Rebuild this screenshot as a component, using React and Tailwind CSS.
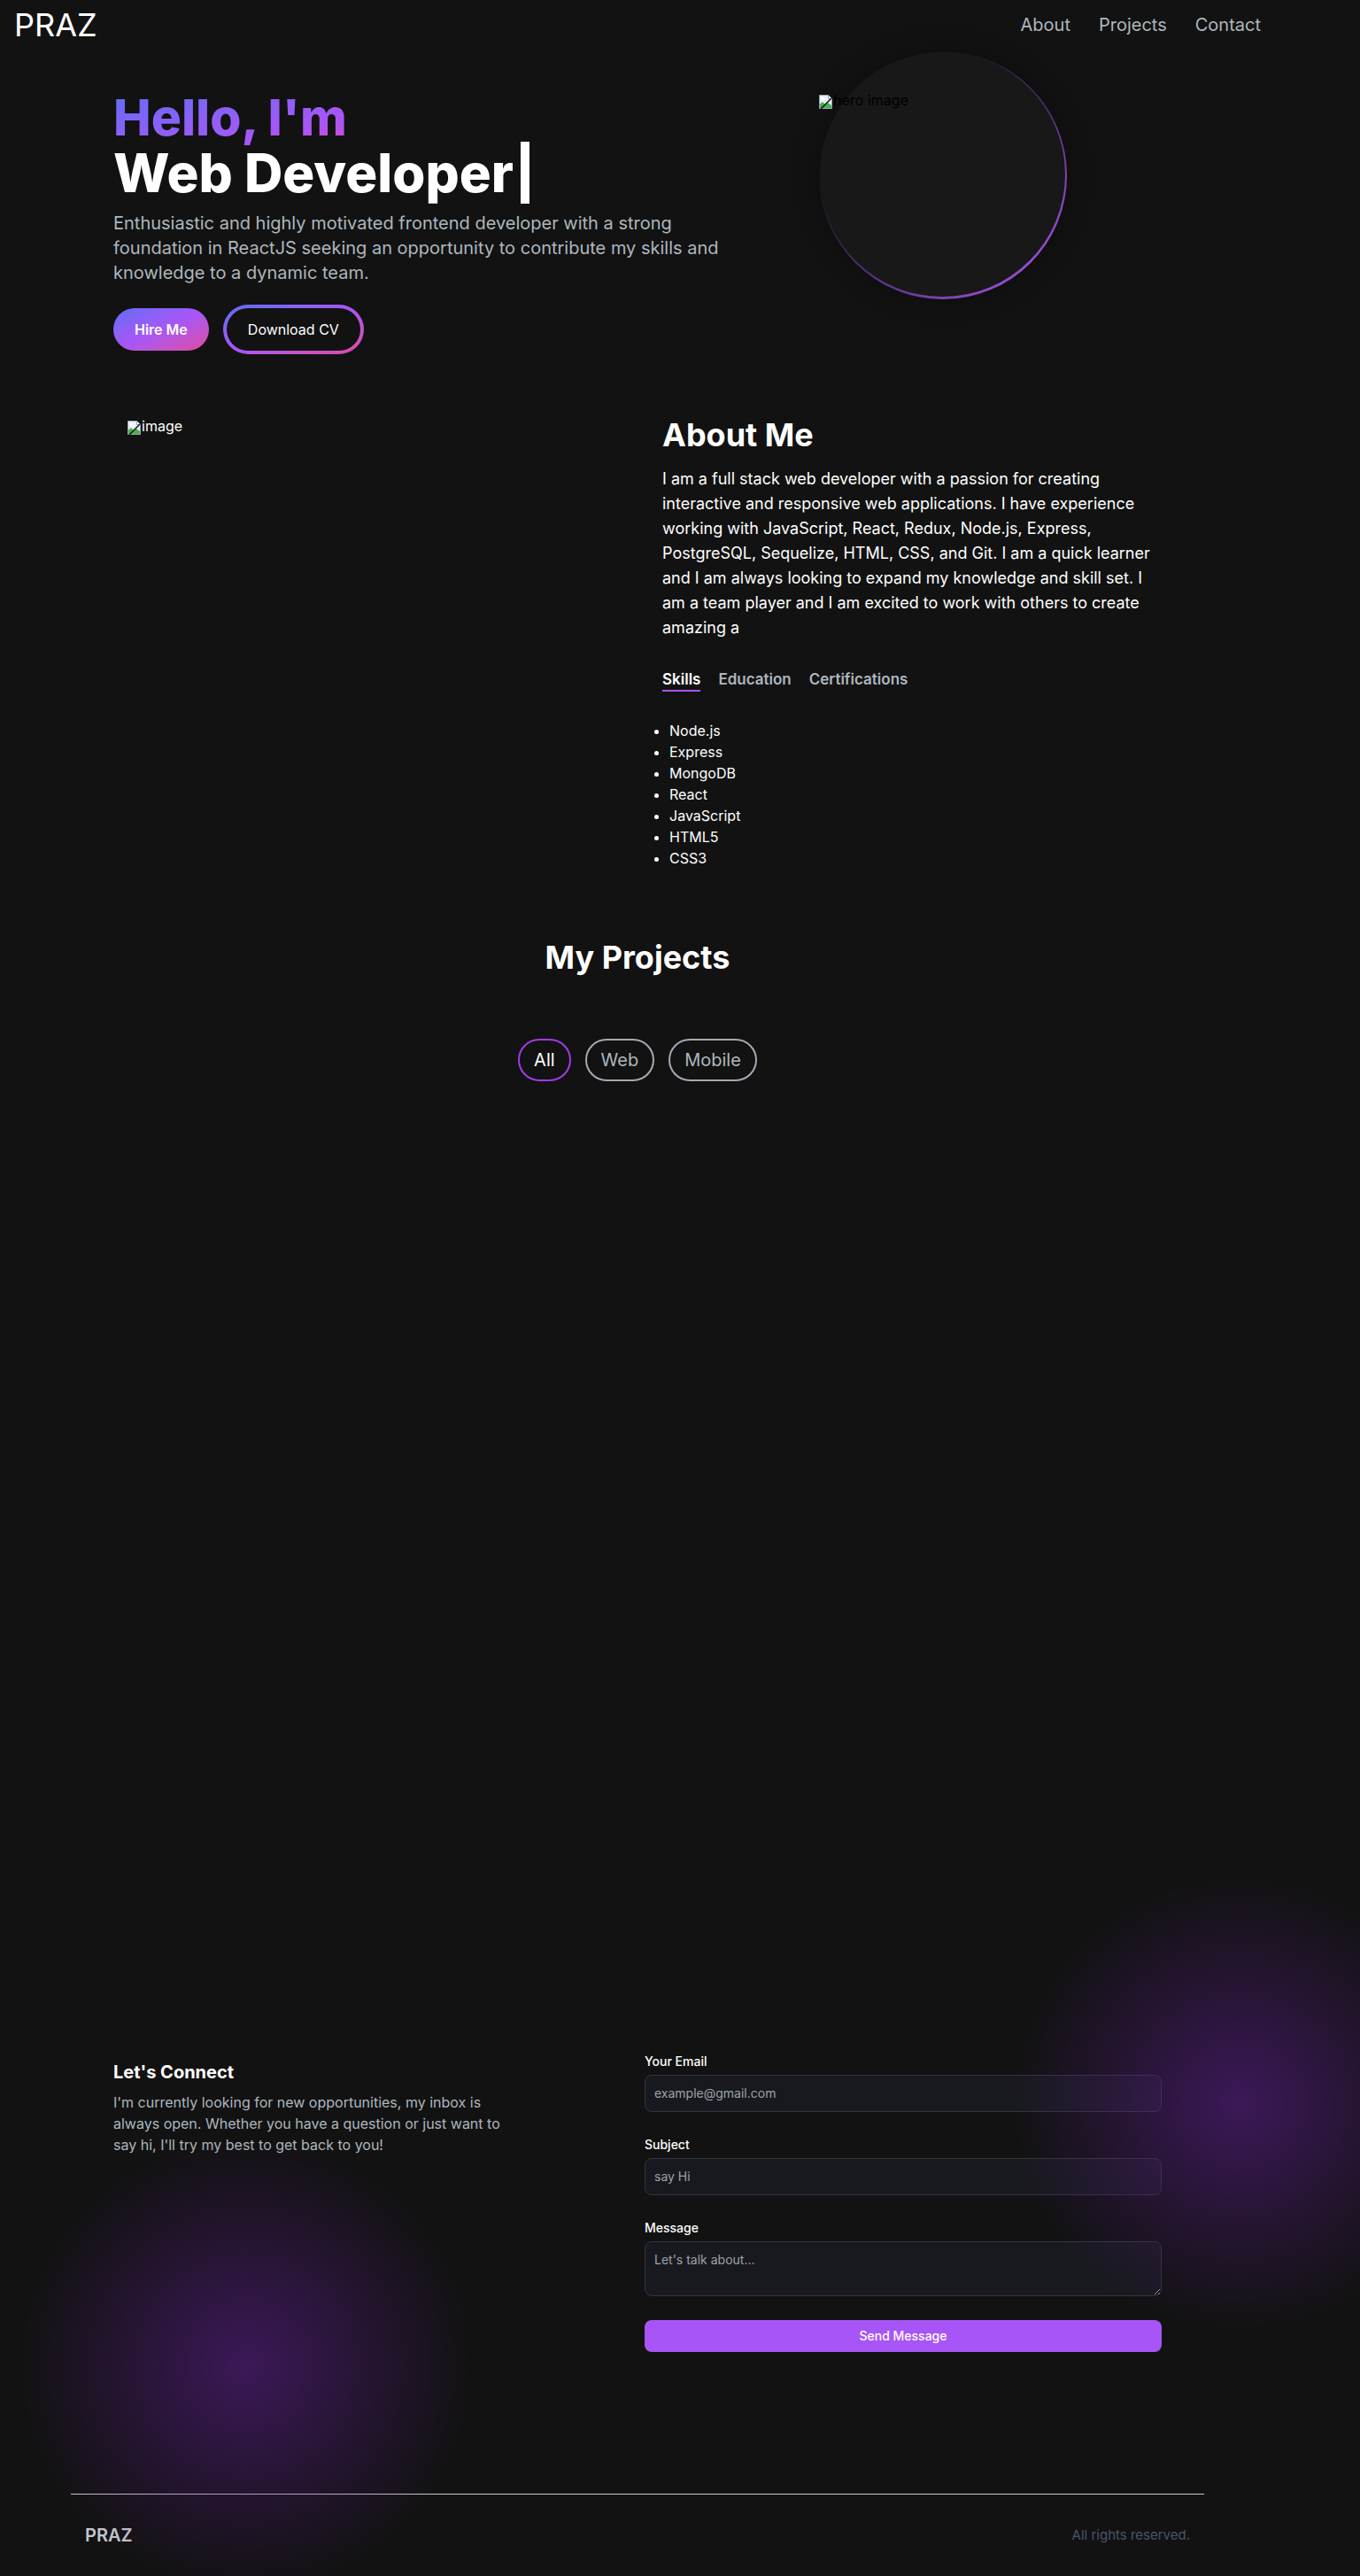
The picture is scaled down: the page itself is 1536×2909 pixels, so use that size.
import React from 'react';

const BrokenImage = () => (
    <svg width="16" height="16" viewBox="0 0 16 16" className="shrink-0">
        <path d="M0.5 0.5h10l4 4v11h-14z" fill="#e9f0fa" stroke="#9aa4b1" />
        <path d="M10.5 0.5v4h4" fill="#ffffff" stroke="#9aa4b1" />
        <path d="M1 15V10.5l3-2.5 3 3 3-2 4 3V15z" fill="#4caf50" />
        <ellipse cx="5" cy="4.5" rx="2.2" ry="1.2" fill="#ffffff" />
        <path d="M2 16L14 4" stroke="#121212" strokeWidth="1.5" />
    </svg>
);

const Navbar = () => {
    return (
        <nav className="flex items-center justify-between px-4 py-2">
            {/* Logo */}
            <span className="text-4xl text-white">PRAZ</span>

            {/* Links */}
            <ul className="flex gap-8">
                <li className="text-xl text-[#ADB7BE]">About</li>
                <li className="text-xl text-[#ADB7BE]">Projects</li>
                <li className="text-xl text-[#ADB7BE]">Contact</li>
            </ul>
        </nav>
    );
};

const Hero = () => {
    return (
        <section className="grid grid-cols-12">
            <div className="col-span-7 pt-[44px]">
                <h1 className="mb-[12px] text-6xl font-extrabold leading-[62px] text-white">
                    <span className="bg-linear-to-br from-[#5a6cf6] via-[#a855f7] via-75% to-[#d946c8] bg-clip-text text-[57px] text-transparent">
                        Hello, I'm
                    </span>
                    <span className="flex items-center">
                        <span>Web Developer</span>
                        <span className="-my-1 ml-2 h-[70px] w-[10px] bg-white"></span>
                    </span>
                </h1>
                <p className="mb-[22px] text-xl leading-7 text-[#ADB7BE]">
                    Enthusiastic and highly motivated frontend developer with a strong foundation in ReactJS
                    seeking an opportunity to contribute my skills and knowledge to a dynamic team.
                </p>
                <div className="flex items-center">
                    <button className="mr-4 rounded-full bg-linear-to-br from-[#5a6cf6] via-[#a855f7] to-[#e0469f] px-6 py-3 font-semibold text-white">
                        Hire Me
                    </button>
                    <button className="rounded-full bg-linear-to-br from-[#5a6cf6] via-[#a855f7] to-[#e0469f] p-1 text-white">
                        <span className="block rounded-full bg-[#121212] px-6 py-3">Download CV</span>
                    </button>
                </div>
            </div>
            <div className="col-span-5 flex justify-center pt-[2px]">
                <div className="relative h-[280px] w-[280px] rounded-full bg-linear-to-br from-transparent from-25% via-[#a855f7]/50 via-60% to-[#b35cf8] pb-[3px] pl-px pr-[2px] pt-px shadow-[0_0_30px_rgba(0,0,0,0.3)]">
                    <div className="h-full w-full rounded-full bg-[#181818]"></div>
                    <div className="absolute left-0 top-[45px] flex items-end">
                        <BrokenImage />
                        <span className="leading-5 text-black">hero image</span>
                    </div>
                </div>
            </div>
        </section>
    );
};

const About = () => {
    const skills = ['Node.js', 'Express', 'MongoDB', 'React', 'JavaScript', 'HTML5', 'CSS3'];
    return (
        <section className="grid grid-cols-2 items-start gap-[56px] px-4 pb-16 pt-[71px]">
            <div className="flex items-end">
                <BrokenImage />
                <span className="leading-5 text-white">image</span>
            </div>
            <div className="-mr-1">
                <h2 className="mb-4 text-4xl font-bold text-white">About Me</h2>
                <p className="text-lg text-white">
                    I am a full stack web developer with a passion for creating interactive and responsive web
                    applications. I have experience working with JavaScript, React, Redux, Node.js, Express,
                    PostgreSQL, Sequelize, HTML, CSS, and Git. I am a quick learner and I am always looking to
                    expand my knowledge and skill set. I am a team player and I am excited to work with others
                    to create amazing a
                </p>

                {/* Tabs */}
                <div className="mt-8 flex text-[17px] leading-6">
                    <div className="mr-5">
                        <p className="font-semibold text-white">Skills</p>
                        <div className="h-[2px] bg-[#a855f7]"></div>
                    </div>
                    <p className="mr-5 font-semibold text-[#ADB7BE]">Education</p>
                    <p className="mr-5 font-semibold text-[#ADB7BE]">Certifications</p>
                </div>

                <ul className="mt-8 list-disc pl-2 text-white">
                    {skills.map((s) => (
                        <li key={s}>{s}</li>
                    ))}
                </ul>
            </div>
        </section>
    );
};

const Projects = () => {
    return (
        <section>
            <h2 className="mb-12 mt-4 text-center text-4xl font-bold text-white">My Projects</h2>
            <div className="flex items-center justify-center gap-4 py-6">
                <button className="rounded-full border-2 border-[#a23bec] px-4 py-2 text-xl text-white">All</button>
                <button className="rounded-full border-2 border-[#a3aab3] px-4 py-2 text-xl text-[#ADB7BE]">Web</button>
                <button className="rounded-full border-2 border-[#a3aab3] px-4 py-2 text-xl text-[#ADB7BE]">Mobile</button>
            </div>
            {/* project cards area (empty) */}
            <div className="h-[929px]"></div>
        </section>
    );
};

const Contact = () => {
    return (
        <section className="relative mb-16 mt-12 grid grid-cols-2 gap-4 py-24">
            <div className="pointer-events-none absolute left-[1012px] top-[-107px] h-[520px] w-[520px] rounded-full bg-[radial-gradient(circle,rgba(88,28,135,0.6)_0%,rgba(88,28,135,0.25)_40%,rgba(88,28,135,0)_70%)]"></div>
            <div className="pointer-events-none absolute left-[-110px] top-[189px] h-[520px] w-[520px] rounded-full bg-[radial-gradient(circle,rgba(88,28,135,0.6)_0%,rgba(88,28,135,0.25)_40%,rgba(88,28,135,0)_70%)]"></div>

            <div>
                <h5 className="my-2 text-xl font-bold text-white">Let's Connect</h5>
                <p className="mb-4 max-w-md text-[#ADB7BE]">
                    I'm currently looking for new opportunities, my inbox is always open. Whether you have a
                    question or just want to say hi, I'll try my best to get back to you!
                </p>
            </div>
            <div>
                <form className="flex flex-col">
                    <div className="mb-[27px]">
                        <label className="mb-[5px] block text-sm font-medium text-white">Your Email</label>
                        <input
                            type="email"
                            placeholder="example@gmail.com"
                            className="block w-full rounded-lg border border-[#33353F] bg-[#18191E] p-2.5 text-sm text-gray-100 placeholder-[#9CA2A9]"
                        />
                    </div>
                    <div className="mb-[27px]">
                        <label className="mb-[5px] block text-sm font-medium text-white">Subject</label>
                        <input
                            type="text"
                            placeholder="say Hi"
                            className="block w-full rounded-lg border border-[#33353F] bg-[#18191E] p-2.5 text-sm text-gray-100 placeholder-[#9CA2A9]"
                        />
                    </div>
                    <div className="mb-[27px]">
                        <label className="mb-[5px] block text-sm font-medium text-white">Message</label>
                        <textarea
                            rows={2}
                            placeholder="Let's talk about..."
                            className="block w-full rounded-lg border border-[#33353F] bg-[#18191E] p-2.5 text-sm text-gray-100 placeholder-[#9CA2A9]"
                        />
                    </div>
                    <button type="button" className="w-full rounded-lg bg-[#a855f7] px-5 py-2 text-sm font-medium text-white">
                        Send Message
                    </button>
                </form>
            </div>
        </section>
    );
};

const Footer = () => {
    return (
        <footer className="mx-auto w-[1280px] border-t border-[#c9c9c9]">
            <div className="flex items-center justify-between px-4 py-8">
                <span className="text-xl font-semibold leading-7 text-[#c4c7cc]">PRAZ</span>
                <p className="text-[15px] text-[#475569]">All rights reserved.</p>
            </div>
        </footer>
    );
};

const App = () => {
    return (
        <div className="relative min-h-[2909px] overflow-hidden bg-[#121212] font-[family-name:Inter,sans-serif] text-white">
            <div className="w-[1440px]">
                <Navbar />
                <main className="mx-auto w-[1280px] px-12">
                    <Hero />
                    <About />
                    <Projects />
                    <Contact />
                </main>
                <Footer />
            </div>
        </div>
    );
};

export default App;
